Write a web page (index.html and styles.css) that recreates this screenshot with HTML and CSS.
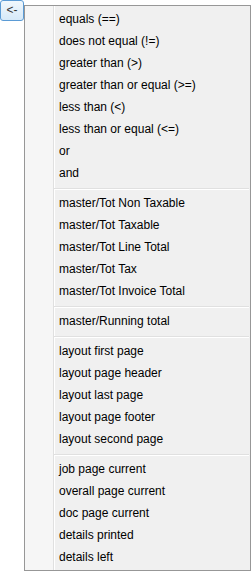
FILE: index.html
```html
<!DOCTYPE html>
<html lang="en">
<head>
    <meta charset="UTF-8">
    <title>Expression menu</title>
    <link rel="stylesheet" href="styles.css">
</head>
<body>
    <div class="picker">
        <button class="back-btn">&lt;-</button>

        <div class="ctx-menu">
            <div class="menu-item">equals (==)</div>
            <div class="menu-item">does not equal (!=)</div>
            <div class="menu-item">greater than (&gt;)</div>
            <div class="menu-item">greater than or equal (&gt;=)</div>
            <div class="menu-item">less than (&lt;)</div>
            <div class="menu-item">less than or equal (&lt;=)</div>
            <div class="menu-item">or</div>
            <div class="menu-item">and</div>
            <div class="menu-sep"></div>
            <div class="menu-item">master/Tot Non Taxable</div>
            <div class="menu-item">master/Tot Taxable</div>
            <div class="menu-item">master/Tot Line Total</div>
            <div class="menu-item">master/Tot Tax</div>
            <div class="menu-item">master/Tot Invoice Total</div>
            <div class="menu-sep"></div>
            <div class="menu-item">master/Running total</div>
            <div class="menu-sep"></div>
            <div class="menu-item">layout first page</div>
            <div class="menu-item">layout page header</div>
            <div class="menu-item">layout last page</div>
            <div class="menu-item">layout page footer</div>
            <div class="menu-item">layout second page</div>
            <div class="menu-sep"></div>
            <div class="menu-item">job page current</div>
            <div class="menu-item">overall page current</div>
            <div class="menu-item">doc page current</div>
            <div class="menu-item">details printed</div>
            <div class="menu-item">details left</div>
        </div>
    </div>
</body>
</html>
```

FILE: styles.css
```css
:root {
    --menu-bg: #f0f0f0;
    --menu-gutter: #f6f6f6;
    --menu-border: #979797;
    --menu-line: #e0e0e0;
    --btn-border: #5b9bd5;
    --text-color: #000000;
}

body, html {
    margin: 0;
    padding: 0;
    background-color: #ffffff;
    font-family: "Liberation Sans", Arial, sans-serif;
    font-size: 12px;
    color: var(--text-color);
}

.picker {
    display: flex;
    align-items: flex-start;
}

.back-btn {
    width: 24px;
    height: 21px;
    margin: 0;
    padding: 0 0 2px 0;
    border: 1px solid var(--btn-border);
    border-radius: 3px;
    background: linear-gradient(to bottom, #f1f8fd 0%, #e3f0fa 50%, #d6e9f8 100%);
    font-family: "Liberation Sans", Arial, sans-serif;
    font-size: 12px;
    color: #333;
    box-sizing: border-box;
}

.ctx-menu {
    width: 227px;
    margin-top: 5px;
    padding: 2px 0;
    border: 1px solid var(--menu-border);
    box-sizing: border-box;
    /* gutter + double vertical rule */
    background: linear-gradient(to right,
        var(--menu-gutter) 0 28px,
        var(--menu-line) 28px 29px,
        #ffffff 29px 30px,
        var(--menu-bg) 30px);
}

.menu-item {
    height: 22px;
    line-height: 22px;
    padding-left: 34px;
    white-space: nowrap;
}

.menu-sep {
    height: 8px;
    margin-left: 29px;
    margin-right: 1px;
    box-sizing: border-box;
    padding-top: 4px;
}

.menu-sep::before {
    content: "";
    display: block;
    border-top: 1px solid var(--menu-line);
    border-bottom: 1px solid #ffffff;
}
```
